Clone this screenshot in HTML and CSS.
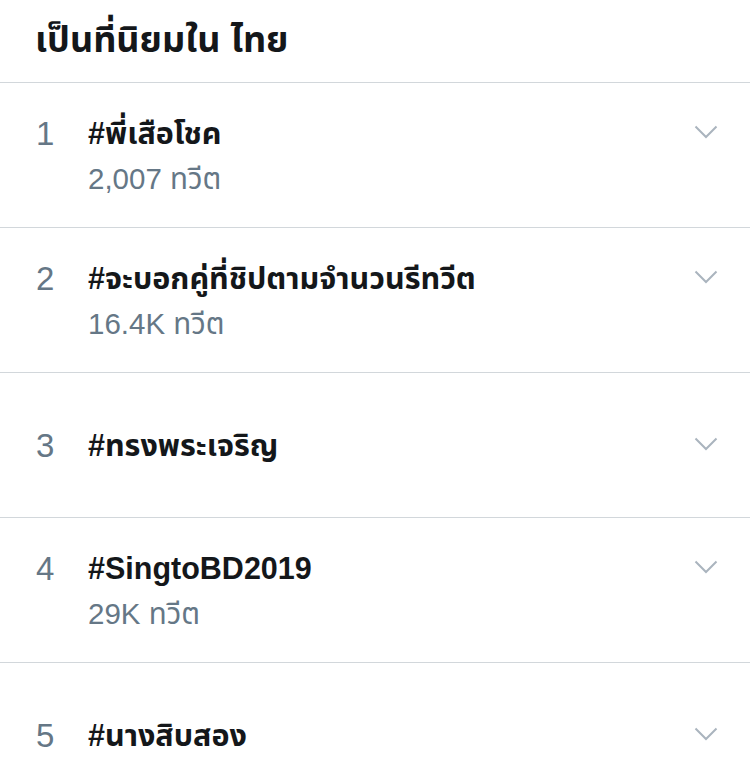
FILE: index.html
```html
<!DOCTYPE html>
<html lang="th">
<head>
<meta charset="utf-8">
<link rel="stylesheet" href="styles.css">
</head>
<body>
<div class="panel">
  <header class="head">เป็นที่นิยมใน ไทย</header>
  <ul class="list">
    <li class="row">
      <span class="rank">1</span>
      <div class="info">
        <div class="title">#พี่เสือโชค</div>
        <div class="count">2,007 ทวีต</div>
      </div>
      <svg class="chev" viewBox="0 0 24 14"><path d="M1.5 1.5 L12 12 L22.5 1.5"/></svg>
    </li>
    <li class="row">
      <span class="rank">2</span>
      <div class="info">
        <div class="title">#จะบอกคู่ที่ชิปตามจำนวนรีทวีต</div>
        <div class="count">16.4K ทวีต</div>
      </div>
      <svg class="chev" viewBox="0 0 24 14"><path d="M1.5 1.5 L12 12 L22.5 1.5"/></svg>
    </li>
    <li class="row single">
      <span class="rank">3</span>
      <div class="info">
        <div class="title">#ทรงพระเจริญ</div>
      </div>
      <svg class="chev" viewBox="0 0 24 14"><path d="M1.5 1.5 L12 12 L22.5 1.5"/></svg>
    </li>
    <li class="row">
      <span class="rank">4</span>
      <div class="info">
        <div class="title">#SingtoBD2019</div>
        <div class="count">29K ทวีต</div>
      </div>
      <svg class="chev" viewBox="0 0 24 14"><path d="M1.5 1.5 L12 12 L22.5 1.5"/></svg>
    </li>
    <li class="row single">
      <span class="rank">5</span>
      <div class="info">
        <div class="title">#นางสิบสอง</div>
      </div>
      <svg class="chev" viewBox="0 0 24 14"><path d="M1.5 1.5 L12 12 L22.5 1.5"/></svg>
    </li>
  </ul>
</div>
</body>
</html>
```

FILE: styles.css
```css
html, body {
  margin: 0;
  padding: 0;
  background: #ffffff;
}
body {
  font-family: "Liberation Sans", "Noto Sans Thai", "Noto Sans", sans-serif;
  color: #14171a;
  overflow: hidden;
}
.panel {
  width: 750px;
}
.head {
  height: 83px;
  box-sizing: border-box;
  padding: 16px 0 0 35px;
  font-size: 36px;
  font-weight: bold;
  line-height: 48px;
  border-bottom: 1px solid #d2d7db;
}
.list {
  list-style: none;
  margin: 0;
  padding: 0;
}
.row {
  height: 145px;
  box-sizing: border-box;
  border-bottom: 1px solid #d2d7db;
  display: flex;
  align-items: flex-start;
  padding: 28px 32px 0 36px;
}
.row.single {
  padding-top: 50px;
}
.rank {
  width: 52px;
  flex: none;
  font-size: 33px;
  line-height: 45px;
  color: #657786;
}
.info {
  flex: 1;
  display: flex;
  flex-direction: column;
}
.title {
  font-size: 30.5px;
  font-weight: bold;
  line-height: 45px;
}
.count {
  font-size: 29.5px;
  line-height: 45px;
  color: #657786;
}
.chev {
  width: 24px;
  height: 14px;
  flex: none;
  margin-top: 14px;
  fill: none;
  stroke: #aab4be;
  stroke-width: 2;
}
```
